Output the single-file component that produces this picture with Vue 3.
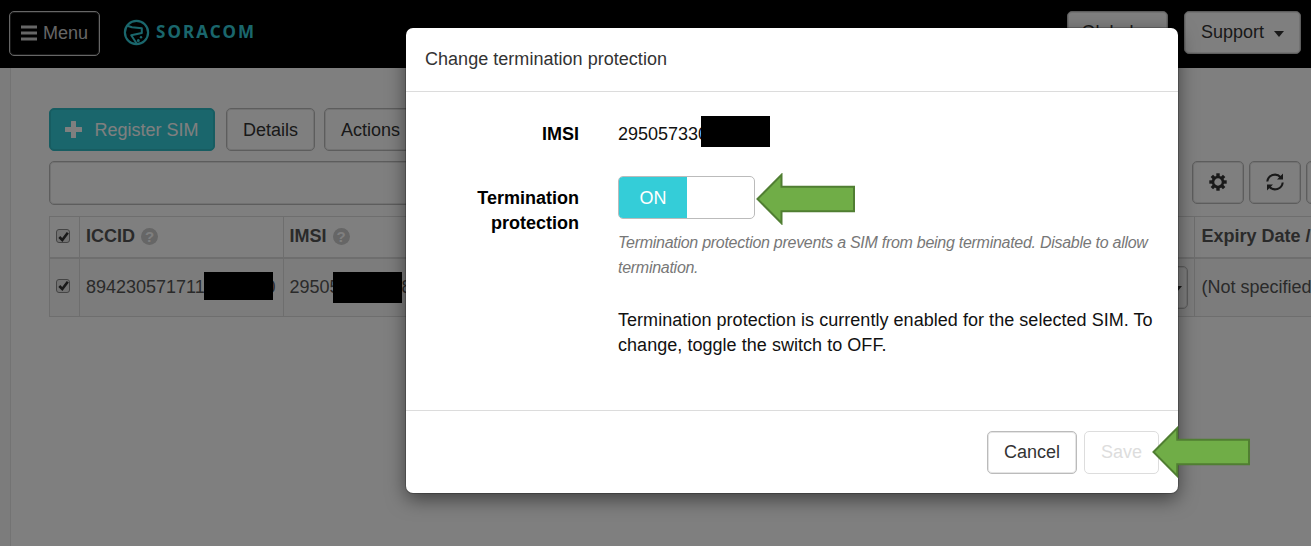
<script setup>
const columns = ['ICCID', 'IMSI']
</script>

<template>
  <div class="page">
    <header class="navbar">
      <button class="btn menu">
        <svg width="16" height="16" viewBox="0 0 16 16"><path d="M0 .5h16v3H0zM0 6.5h16v3H0zM0 12.5h16v3H0z" fill="#ccc" /></svg>
        <span>Menu</span>
      </button>
      <div class="brand">
        <svg width="27" height="27" viewBox="0 0 27 27" fill="none" stroke="#34cdd8" stroke-width="2.2">
          <circle cx="13.5" cy="13.5" r="11.6" />
          <path d="M3.5 6.5 9 8.300 18.800 9.200 18.800 14 8.200 16.200 14 25" stroke-width="2" stroke-linejoin="round" />
          <circle cx="18" cy="18.300" r="1.2" fill="#34cdd8" stroke="none" />
          <circle cx="15.300" cy="21.500" r=".8" stroke-width="1.4" />
        </svg>
        <span class="wordmark">SORACOM</span>
      </div>
      <div class="nav-right">
        <button class="btn global">Global <i class="caret"></i></button>
        <button class="btn support">Support <i class="caret"></i></button>
      </div>
    </header>

    <div class="content">
      <aside class="side"></aside>
      <main class="main">
        <div class="toolbar">
          <button class="btn primary">
            <svg width="17" height="17" viewBox="0 0 17 17"><path d="M6.5 0h4q.5 0 .5.5V6h5.500q.5 0 .5.5v4q0 .5-.5.5H11v5.500q0 .5-.5.5h-4q-.5 0-.5-.5V11H.5q-.5 0-.5-.5v-4Q0 6 .5 6H6V.5Q6 0 6.500 0z" fill="#fff" /></svg>
            <span>Register SIM</span>
          </button>
          <button class="btn details">Details</button>
          <button class="btn actions">Actions <i class="caret"></i></button>
        </div>
        <div class="search-row">
          <div class="search"></div>
          <button class="btn icon">
            <svg width="18" height="18" viewBox="-9 -9 18 18">
              <g fill="#333">
                <rect v-for="n in 8" :key="n" x="-1.7" y="-8.7" width="3.4" height="4" :transform="`rotate(${n * 45})`" />
              </g>
              <circle r="5" fill="none" stroke="#333" stroke-width="2.6" />
            </svg>
          </button>
          <button class="btn icon">
            <svg width="18" height="18" viewBox="0 0 18 18" fill="none" stroke="#333" stroke-width="2.1">
              <path d="M1.300 8.500A7.600 7.500 0 0 1 14.600 4.300M16.700 9.500A7.600 7.500 0 0 1 3.400 13.700" />
              <path d="M17 .5V6.500h-6zM1 17.500V11.500h6z" fill="#333" stroke="none" />
            </svg>
          </button>
          <button class="btn icon"></button>
        </div>
        <div class="table">
          <div class="row head">
            <div class="cell"><span class="check"><svg width="11" height="11" viewBox="0 0 11 11"><path d="M1.300 6 4.300 9 9.800 1.800" fill="none" stroke="#333" stroke-width="2.600" /></svg></span></div>
            <div v-for="c in columns" :key="c" class="cell">{{ c }} <span class="help">?</span></div>
            <div class="cell">Expiry Date /</div>
          </div>
          <div class="row">
            <div class="cell"><span class="check"><svg width="11" height="11" viewBox="0 0 11 11"><path d="M1.300 6 4.300 9 9.800 1.800" fill="none" stroke="#333" stroke-width="2.600" /></svg></span></div>
            <div class="cell"><span class="num">894230571711</span><span class="end">0</span></div>
            <div class="cell"><span class="num">29505</span><span class="end imsi-end">8</span><button class="btn select"><i class="caret"></i></button></div>
            <div class="cell last">(Not specified</div>
          </div>
        </div>
      </main>
    </div>

    <div class="backdrop"></div>
    <i class="redact r1"></i>
    <i class="redact r2"></i>

    <section class="modal">
      <h4 class="modal-head">Change termination protection</h4>
      <div class="modal-body">
        <b class="label">IMSI</b>
        <div class="value">295057330<i class="redact r3"></i></div>
        <b class="label second">Termination protection</b>
        <div class="field">
          <div class="switch"><span class="on">ON</span></div>
          <p class="hint">Termination protection prevents a SIM from being terminated. Disable to allow<br />termination.</p>
          <p class="note">Termination protection is currently enabled for the selected SIM. To<br />change, toggle the switch to OFF.</p>
        </div>
      </div>
      <footer class="modal-foot">
        <button class="btn">Cancel</button>
        <button class="btn save">Save</button>
      </footer>
    </section>

    <svg class="arrow a1" width="100" height="52" viewBox="0 0 100 52"><path d="M1.500 26 25.500 1.800V13.700H98V38.300H25.500V50.200Z" /></svg>
    <svg class="arrow a2" width="100" height="52" viewBox="0 0 100 52"><path d="M1.500 26 25.500 1.800V13.700H98V38.300H25.500V50.200Z" /></svg>
  </div>
</template>

<style>
body { margin: 0; overflow: hidden; }
</style>

<style scoped>
* { box-sizing: border-box; }
.page { position: relative; width: 1311px; height: 546px; overflow: hidden; background: #fff; color: #555; font: 18px/25px "Liberation Sans", Arial, sans-serif; }
.navbar { height: 68px; background: #000; display: flex; align-items: flex-start; padding: 11px 10px 0 9px; }
.btn { height: 43px; padding: 1px 16px 0; border: 1px solid #bbb; box-shadow: inset 0 0 0 1px rgba(0, 0, 0, .1); border-radius: 5px; background: #fff; color: #333; font: inherit; white-space: nowrap; flex: none; display: flex; align-items: center; justify-content: center; }
.menu { width: 91px; height: 45px; background: #000; color: #ccc; border: 1px solid #ccc; box-shadow: inset 0 0 0 1px rgba(255, 255, 255, .2); padding: 0; gap: 6px; }
.menu svg { margin-top: -2px; }
.brand { display: flex; align-items: center; height: 43px; margin-left: 23px; gap: 6px; }
.wordmark { color: #34cdd8; font: bold 17px/26px "Noto Sans", sans-serif; letter-spacing: 2.1px; margin-top: -1px; }
.nav-right { margin-left: auto; display: flex; gap: 16px; }
.nav-right .btn { padding-top: 0; padding-bottom: 1px; }
.caret { border: 5px solid transparent; border-top: 6px solid #333; border-bottom: 0; margin-left: 10px; margin-top: 3px; flex: none; }
.global { width: 101px; }
.support { width: 117px; }
.content { display: flex; height: 478px; }
.side { width: 11px; background: #f8f8f8; border-right: 1px solid #e7e7e7; flex: none; }
.main { padding: 40px 0 0 38px; flex: none; width: 1500px; }
.toolbar { display: flex; gap: 10px; }
.primary { width: 166px; background: #34cdd8; border-color: #2ebbc5; color: #fff; gap: 12px; padding: 0; }
.primary span { margin-top: 2px; }
.details { margin-left: 1px; width: 89px; }
.actions { margin-left: -1px; }
.search-row { display: flex; margin-top: 10px; gap: 5px; }
.search { width: 1120px; height: 44px; margin-right: 18px; border: 1px solid #bbb; box-shadow: inset 0 0 0 1px rgba(0, 0, 0, .1); border-radius: 5px; }
.icon { width: 52px; padding: 0 0 2px; }
.table { margin-top: 11px; border: 1px solid #ddd; }
.row { display: grid; grid-template-columns: 30px 203.5px 911px 1fr; height: 57px; background: #f9f9f9; }
.head { height: 42px; background: #fff; font-weight: bold; border-bottom: 2px solid #ddd; }
.head .cell { padding-bottom: 1px; }
.cell { display: flex; align-items: center; padding-left: 6px; border-right: 1px solid #ddd; white-space: nowrap; position: relative; }
.cell:last-child { padding-left: 7px; }
.check { width: 14px; height: 14px; border: 1px solid #888; border-radius: 3px; display: flex; align-items: center; justify-content: center; background: #e4e4e4; margin-top: -1px; }
.row:last-child .check { margin-top: -4px; }
.help { width: 17px; height: 17px; border-radius: 50%; background: #ccc; color: #fff; font-size: 15px; line-height: 17px; text-align: center; margin-left: 6px; margin-top: -1px; }
.end { position: absolute; right: 7px; }
.imsi-end { right: auto; left: 118px; }
.select { position: absolute; right: 6px; width: 60px; padding: 0 5px 0 0; justify-content: flex-end; }
.backdrop { position: absolute; inset: 0; background: rgba(0, 0, 0, .5); }
.redact { position: absolute; background: #000; width: 69px; height: 31px; }
.r1 { left: 204px; top: 272px; height: 28px; }
.r2 { left: 333px; top: 272px; }
.modal { position: absolute; left: 406px; top: 28px; width: 772px; height: 465px; background: #fff; border-radius: 7px; box-shadow: 0 0 0 1px rgba(0, 0, 0, .2), 0 6px 19px rgba(0, 0, 0, .5); color: #111; display: flex; flex-direction: column; }
.modal-head { margin: 0; padding: 19px 19px 0; height: 64px; border-bottom: 1px solid #dcdcdc; font-size: 18px; font-weight: normal; line-height: 25px; color: #333; letter-spacing: .03px; }
.modal-body { flex: 1; display: grid; grid-template-columns: 173px 1fr; grid-template-rows: 54px 1fr; column-gap: 39px; padding-top: 30px; align-items: start; }
.label { text-align: right; color: #000; }
.second { padding: 10px 0 0 60px; }
.value { position: relative; }
.r3 { left: 83px; top: -6px; }
.switch { width: 137px; height: 43px; border: 1px solid #bbb; border-radius: 5px; overflow: hidden; }
.on { display: block; width: 68px; height: 41px; background: #34cdd8; color: #fff; text-align: center; line-height: 42px; }
.hint { margin: 11px 0 0; font-size: 16px; letter-spacing: -.275px; font-style: italic; color: #777; white-space: nowrap; }
.note { margin: 28px 0 0; white-space: nowrap; letter-spacing: .04px; }
.modal-foot { height: 83px; border-top: 1px solid #dcdcdc; display: flex; justify-content: flex-end; gap: 7px; padding: 20px 19px 0; }
.modal-foot .btn { padding: 0; width: 90px; }
.modal-foot .save { width: 75px; color: #ddd; border-color: #ddd; box-shadow: none; }
.arrow { position: absolute; fill: #70ad47; stroke: #507e32; stroke-width: 2; }
.a1 { left: 756px; top: 173px; }
.a2 { left: 1152px; top: 426px; width: 99px; }
</style>
